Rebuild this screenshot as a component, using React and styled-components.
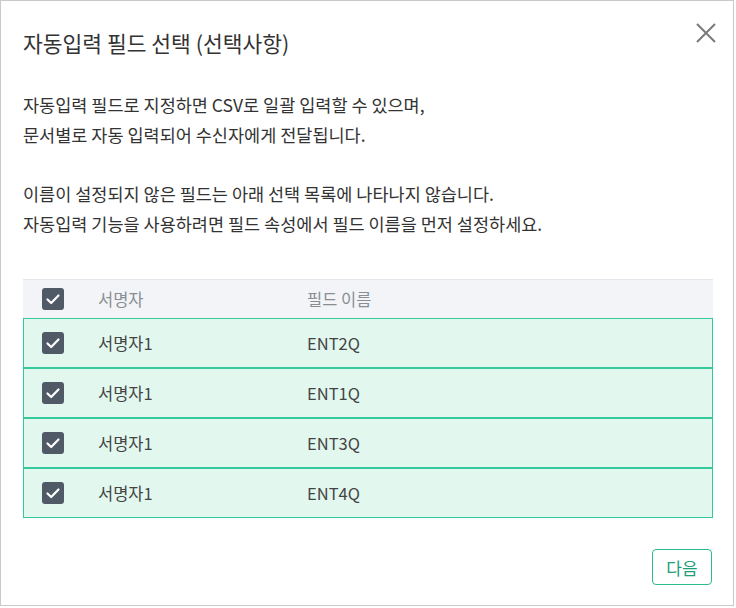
import React from "react";
import styled, { createGlobalStyle } from "styled-components";

const rows = [
  { signer: "서명자1", field: "ENT2Q" },
  { signer: "서명자1", field: "ENT1Q" },
  { signer: "서명자1", field: "ENT3Q" },
  { signer: "서명자1", field: "ENT4Q" },
];

export default function App() {
  return (
    <>
      <Global />
      <Dialog>
        <Header>
          <Title>자동입력 필드 선택 (선택사항)</Title>
          <Close aria-label="닫기">
            <svg width="22" height="22" viewBox="0 0 22 22">
              <path d="M2 2 L20 20 M20 2 L2 20" stroke="#7a7a7a" strokeWidth="2" fill="none" />
            </svg>
          </Close>
        </Header>
        <Desc>
          자동입력 필드로 지정하면 CSV로 일괄 입력할 수 있으며,
          <br />
          문서별로 자동 입력되어 수신자에게 전달됩니다.
        </Desc>
        <Desc $gap>
          이름이 설정되지 않은 필드는 아래 선택 목록에 나타나지 않습니다.
          <br />
          자동입력 기능을 사용하려면 필드 속성에서 필드 이름을 먼저 설정하세요.
        </Desc>
        <Table>
          <Row $head>
            <Check />
            <Cell $head>서명자</Cell>
            <Cell $head>필드 이름</Cell>
          </Row>
          {rows.map((r, i) => (
            <Row key={i}>
              <Check />
              <Cell>{r.signer}</Cell>
              <Cell>{r.field}</Cell>
            </Row>
          ))}
        </Table>
        <Footer>
          <NextButton>다음</NextButton>
        </Footer>
      </Dialog>
    </>
  );
}

function Check() {
  return (
    <Box>
      <svg width="22" height="22" viewBox="0 0 22 22">
        <path d="M5.5 11.5 L9.2 15 L16.5 7.5" stroke="#fff" strokeWidth="2.2" fill="none" strokeLinecap="round" strokeLinejoin="round" />
      </svg>
    </Box>
  );
}

const Global = createGlobalStyle`
  body {
    margin: 0;
    background: #fff;
    font-family: "Noto Sans CJK KR", "Noto Sans", sans-serif;
  }
`;

const Dialog = styled.div`
  box-sizing: border-box;
  width: 734px;
  height: 606px;
  border: 1px solid #c9c9c9;
  padding: 0 20px 0 22px;
  display: flex;
  flex-direction: column;
  background: #fff;
`;

const Header = styled.div`
  display: flex;
  align-items: center;
  justify-content: space-between;
  padding-top: 23px;
  height: 38px;
`;

const Title = styled.h2`
  margin: 0;
  font-size: 21.5px;
  font-weight: 400;
  color: #333;
  line-height: 38px;
`;

const Close = styled.button`
  border: 0;
  background: none;
  padding: 0;
  margin: -20px -4px 0 0;
  width: 22px;
  height: 22px;
  cursor: pointer;
`;

const Desc = styled.p`
  margin: ${(p) => (p.$gap ? "29px 0 0" : "28px 0 0")};
  font-size: 17.5px;
  line-height: 30px;
  color: #333;
`;

const Table = styled.div`
  margin-top: 40px;
  border-top: 1px solid #e4e7eb;
  display: flex;
  flex-direction: column;
`;

const Row = styled.div`
  box-sizing: border-box;
  display: grid;
  grid-template-columns: 56px 209px 1fr;
  align-items: center;
  padding-left: 18px;
  height: ${(p) => (p.$head ? "38px" : "50px")};
  background: ${(p) => (p.$head ? "#f2f4f7" : "#e2f8ef")};
  border: 1px solid ${(p) => (p.$head ? "transparent" : "#33c99b")};
  border-width: ${(p) => (p.$head ? "0 1px" : "1px")};
`;

const Cell = styled.div`
  font-size: 16.5px;
  color: ${(p) => (p.$head ? "#8a8e93" : "#444")};
`;

const Box = styled.div`
  width: 22px;
  height: 22px;
  border-radius: 3px;
  background: #4f5a66;
  display: flex;
`;

const Footer = styled.div`
  display: flex;
  justify-content: flex-end;
  margin-top: 31px;
  padding-right: 1px;
`;

const NextButton = styled.button`
  box-sizing: border-box;
  width: 60px;
  height: 36px;
  border: 1px solid #2dbb8e;
  border-radius: 4px;
  background: #fff;
  color: #1f9e78;
  font-family: "Noto Sans CJK KR", "Noto Sans", sans-serif;
  font-size: 17px;
  cursor: pointer;
`;
